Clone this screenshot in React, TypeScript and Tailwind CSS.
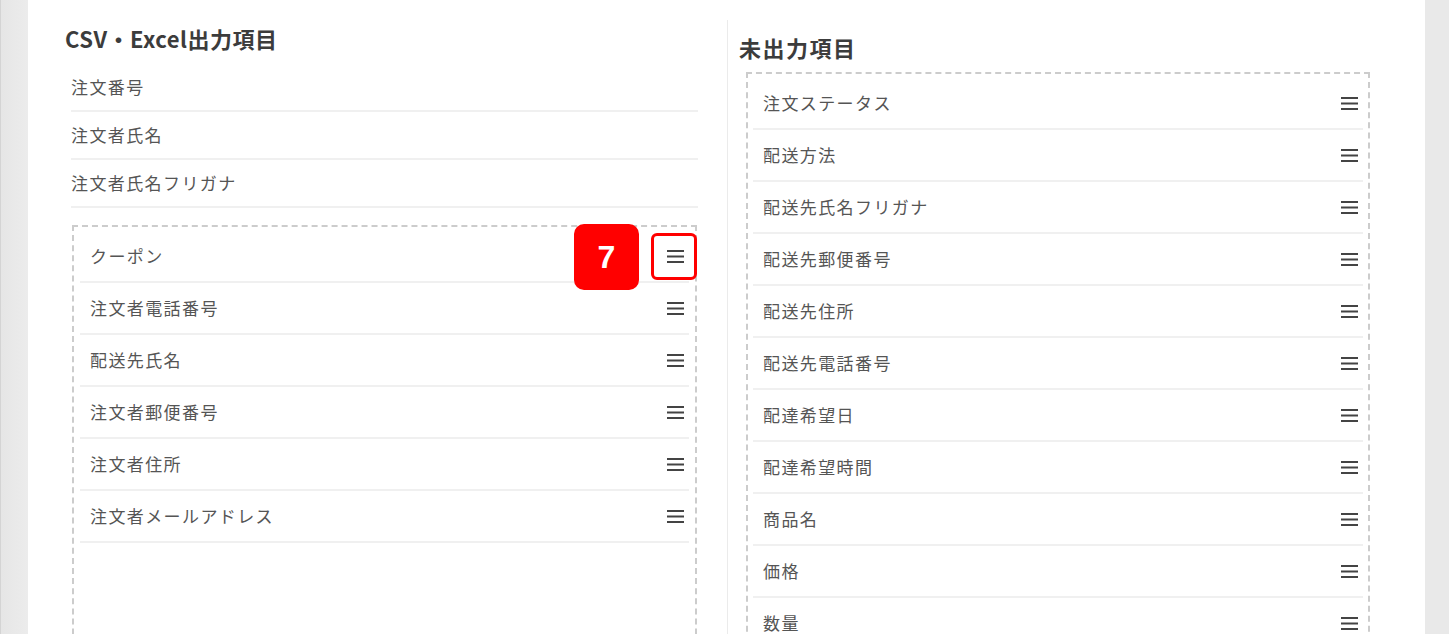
import React from "react"

const fixedItems = ["注文番号", "注文者氏名", "注文者氏名フリガナ"]

const outputItems = ["クーポン", "注文者電話番号", "配送先氏名", "注文者郵便番号", "注文者住所", "注文者メールアドレス"]

const unusedItems = [
  "注文ステータス",
  "配送方法",
  "配送先氏名フリガナ",
  "配送先郵便番号",
  "配送先住所",
  "配送先電話番号",
  "配達希望日",
  "配達希望時間",
  "商品名",
  "価格",
  "数量",
]

function Bars() {
  return (
    <svg width="17" height="13" viewBox="0 0 17 13" className="block">
      <rect x="0" y="0" width="17" height="2" fill="#444" />
      <rect x="0" y="5.5" width="17" height="2" fill="#444" />
      <rect x="0" y="11" width="17" height="2" fill="#444" />
    </svg>
  )
}

function DragRow({ label, highlight }: { label: string; highlight?: boolean }) {
  return (
    <div className="relative flex h-[52px] items-center justify-between border-b-2 border-[#f0f0f0] pl-[10px] pr-[5px]">
      <span className="text-[17px] tracking-[1.4px] text-[#555]">{label}</span>
      <Bars />
      {highlight && (
        <>
          <div className="absolute left-[494px] top-[-7px] flex h-[66px] w-[65px] items-center justify-center rounded-[10px] bg-[#ff0000]">
            <span className="font-['Liberation_Sans',Arial,sans-serif] text-[32px] font-bold text-white">7</span>
          </div>
          <div className="absolute left-[571px] top-[2px] h-[47px] w-[46px] rounded-[6px] border-[3px] border-[#ff0000]" />
        </>
      )}
    </div>
  )
}

export default function App() {
  return (
    <div className="flex h-[634px] w-full overflow-hidden bg-[#e9e9e9] font-['Noto_Sans_CJK_JP','Noto_Sans',sans-serif]">
      <div className="w-[28px] shrink-0 border-l border-[#d4d4d4] bg-gradient-to-r from-[#e6e6e6] to-[#ececec]" />

      <div className="flex flex-1 items-start bg-white pl-[37px] pt-[20px]">
        {/* Output columns */}
        <div className="w-[633px] shrink-0 pt-[3px]">
          <h2 className="h-[30px] text-[22px] font-bold leading-[30px] tracking-[0.5px] text-[#3c3c3c]">CSV・Excel出力項目</h2>
          <div className="ml-[6px] mt-[11px]">
            {fixedItems.map((item) => (
              <div key={item} className="flex h-[48px] items-center border-b-2 border-[#f0f0f0]">
                <span className="text-[17px] tracking-[1.4px] text-[#555]">{item}</span>
              </div>
            ))}
          </div>
          <div className="ml-[7px] mr-[1px] mt-[17px] h-[460px] border-2 border-dashed border-[#cccccc] px-[6px] pt-[4px]">
            {outputItems.map((item, i) => (
              <DragRow key={item} label={item} highlight={i === 0} />
            ))}
          </div>
        </div>

        {/* Unused columns */}
        <div className="ml-[29px] w-[643px] shrink-0 border-l border-[#ebebeb] pl-[11px] pt-[12px]">
          <h2 className="h-[30px] text-[22px] font-bold leading-[30px] tracking-[1.5px] text-[#3c3c3c]">未出力項目</h2>
          <div className="ml-[7px] mt-[10px] w-[624px] border-2 border-dashed border-[#cccccc] px-[5px] pt-[4px]">
            {unusedItems.map((item) => (
              <DragRow key={item} label={item} />
            ))}
          </div>
        </div>
      </div>

      <div className="w-[24px] shrink-0 bg-[#e9e9e9]" />
    </div>
  )
}
